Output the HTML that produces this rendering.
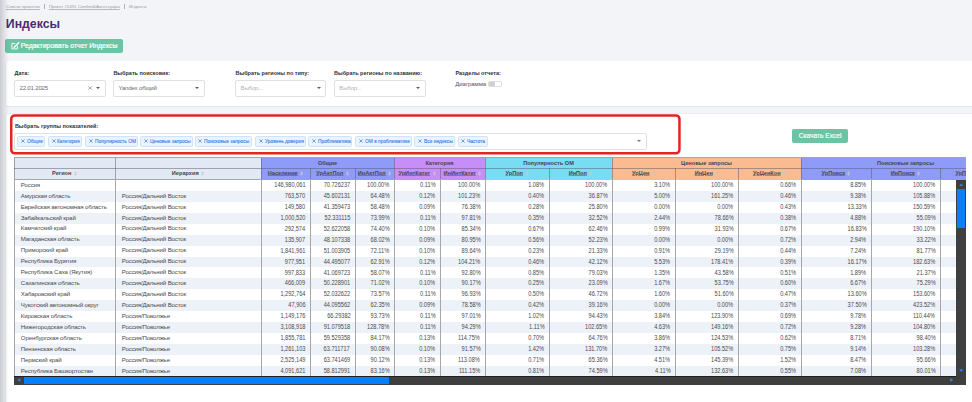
<!DOCTYPE html>
<html><head><meta charset="utf-8"><style>
*{box-sizing:border-box;margin:0;padding:0}
html,body{width:972px;height:402px;overflow:hidden}
body{position:relative;background:#f3f4f8;font-family:"Liberation Sans",sans-serif;color:#333}
.a{position:absolute}
.nw{white-space:nowrap}
.lbl{position:absolute;font-weight:700;font-size:5.5px;color:#2f2f3a;white-space:nowrap;line-height:6px}
.inp{position:absolute;background:#fff;border:1px solid #dfe0e4;border-radius:2px}
.inp .t{position:absolute;left:5px;top:-0.8px;bottom:0;display:flex;align-items:center;font-size:6.05px;letter-spacing:-0.18px;color:#6a6a70;white-space:nowrap}
.caret{position:absolute;width:0;height:0;border-left:2.2px solid transparent;border-right:2.2px solid transparent;border-top:2.4px solid #5a5a5a}
.tag{position:absolute;top:136.3px;height:10.5px;background:#ebf4fe;border:1px solid #cfe2f9;border-radius:1.5px;color:#3582e2;white-space:nowrap;line-height:1;-webkit-text-stroke:0.12px #3582e2}
.tag svg{position:absolute;left:2.9px;top:2px}
.tag span{position:absolute;left:8.6px;top:2.1px;font-size:5.3px;line-height:5.3px;transform:scaleX(.915);transform-origin:0 50%}
.cell{position:absolute;overflow:hidden;white-space:nowrap;display:flex;align-items:center}
.hd{justify-content:center;font-weight:700;font-size:5.6px;color:#45454f}
.hd>u,.hd>b{position:relative;top:-0.8px}
.hd u{text-decoration:underline;text-decoration-color:rgba(60,60,80,.42);text-underline-offset:0.2px}
.srt{margin-left:2.5px;flex:none;position:relative;top:-0.6px}
.bd{font-size:6.1px;letter-spacing:-0.13px;color:#4a4a4e}
.bd span{position:relative;top:-1.2px}
.num{justify-content:flex-end;padding-right:4.8px;font-size:6.4px;letter-spacing:0}
.num span{display:inline-block;transform:scaleX(.88);transform-origin:100% 50%;top:-0.9px}
.txt{padding-left:6.8px}
</style></head><body>

<div class="a nw" style="left:6px;top:4.1px;font-size:4.35px;line-height:6px;color:#9a9aa4"><span style="text-decoration:underline;text-decoration-color:#b8b8c0">Список проектов</span><span style="display:inline-block;width:1px;height:5px;background:#b0b0b8;margin:0 4px 0 4px;vertical-align:-1px"></span><span style="text-decoration:underline;text-decoration-color:#b8b8c0">Проект #1491 Comfort&amp;Аксессуары</span><span style="display:inline-block;width:1px;height:5px;background:#b0b0b8;margin:0 4px 0 4px;vertical-align:-1px"></span><span>Индексы</span></div>
<div class="a nw" style="left:5.8px;top:16px;font-size:12.3px;line-height:16px;font-weight:700;color:#4a2c70">Индексы</div>
<div class="a" style="left:5px;top:39px;width:118px;height:14px;background:#6cc4a4;border-radius:2px"></div>
<svg class="a" style="left:11px;top:42px" width="9" height="8" viewBox="0 0 9 8"><path d="M4.2 1.4H0.9V6.9H6.4V3.9" fill="none" stroke="#fff" stroke-width="0.95"/><path d="M3.2 5.2L7.7 0.7" stroke="#fff" stroke-width="1.5" stroke-linecap="round"/></svg>
<div class="a nw" style="left:20.7px;top:39px;height:14px;line-height:14px;font-size:6.9px;color:#fff;-webkit-text-stroke:0.2px #fff">Редактировать отчет Индексы</div>
<div class="a" style="left:5px;top:60.7px;width:967px;height:46.2px;background:#fff;border-bottom:1px solid #e4e5ea;border-left:0.6px solid #ececf0;border-radius:3px 0 0 3px"></div>
<div class="lbl" style="left:14.5px;top:69.6px">Дата:</div>
<div class="inp" style="left:14.2px;top:80px;width:91.5px;height:17px"><div class="t" style="left:4.3px">22.01.2025</div><svg class="a" style="left:72.4px;top:5px" width="4.2" height="4" viewBox="0 0 4.2 4"><path d="M0.3 0.2L3.9 3.8M3.9 0.2L0.3 3.8" stroke="#8a8a8a" stroke-width="0.75"/></svg><div class="caret" style="left:80.7px;top:5.8px"></div></div>
<div class="lbl" style="left:113.4px;top:69.6px">Выбрать поисковик:</div>
<div class="inp" style="left:113.2px;top:80px;width:91.4px;height:17px"><div class="t" style="left:4.3px">Yandex общий</div><div class="caret" style="left:80.9px;top:5.9px"></div></div>
<div class="lbl" style="left:235.5px;top:69.6px">Выбрать регионы по типу:</div>
<div class="inp" style="left:235.3px;top:80px;width:91.2px;height:17px"><div class="t" style="left:4.3px;color:#b4b4b8">Выбор...</div><div class="caret" style="left:80.9px;top:5.9px"></div></div>
<div class="lbl" style="left:334px;top:69.6px">Выбрать регионы по названию:</div>
<div class="inp" style="left:334px;top:80px;width:91.6px;height:17px"><div class="t" style="left:4.3px;color:#b4b4b8">Выбор...</div><div class="caret" style="left:81.3px;top:5.9px"></div></div>
<div class="lbl" style="left:455.4px;top:69.6px">Разделы отчета:</div>
<div class="a nw" style="left:455.3px;top:80.6px;font-size:6px;letter-spacing:-0.05px;line-height:6px;color:#555">Диаграмма</div>
<div class="a" style="left:488.3px;top:81.2px;width:13.4px;height:5.4px;border:0.8px solid #dedee2;border-radius:1.2px;background:#fff"><div class="a" style="left:0;top:0;width:6px;height:3.8px;border-radius:0.6px;background:#d0d0d4"></div></div>
<div class="a" style="left:5px;top:112.8px;width:967px;height:290px;background:#fff;border-left:0.6px solid #ececf0;border-top:0.6px solid #ececf0;border-radius:3px 0 0 0"></div>
<svg class="a" style="left:10px;top:114px" width="671" height="41" viewBox="0 0 671 41"><rect x="1.25" y="1.45" width="668.2" height="37.9" rx="3.6" fill="none" stroke="#e0271f" stroke-width="2.5"/></svg>
<div class="lbl" style="left:14.9px;top:122.7px">Выбрать группы показателей:</div>
<div class="inp" style="left:14px;top:133px;width:632.6px;height:16.6px"><div class="caret" style="left:621.8px;top:6.3px;border-top-color:#777"></div></div>
<div class="tag" style="left:17.2px;width:27.6px"><svg width="4" height="4" viewBox="0 0 4 4"><path d="M0.4 0.4L3.6 3.6M3.6 0.4L0.4 3.6" stroke="#3f87dc" stroke-width="0.75"/></svg><span>Общие</span></div>
<div class="tag" style="left:47.8px;width:34.6px"><svg width="4" height="4" viewBox="0 0 4 4"><path d="M0.4 0.4L3.6 3.6M3.6 0.4L0.4 3.6" stroke="#3f87dc" stroke-width="0.75"/></svg><span>Категория</span></div>
<div class="tag" style="left:85.1px;width:52.9px"><svg width="4" height="4" viewBox="0 0 4 4"><path d="M0.4 0.4L3.6 3.6M3.6 0.4L0.4 3.6" stroke="#3f87dc" stroke-width="0.75"/></svg><span>Популярность ОМ</span></div>
<div class="tag" style="left:140px;width:52.5px"><svg width="4" height="4" viewBox="0 0 4 4"><path d="M0.4 0.4L3.6 3.6M3.6 0.4L0.4 3.6" stroke="#3f87dc" stroke-width="0.75"/></svg><span>Ценовые запросы</span></div>
<div class="tag" style="left:194.6px;width:57.4px"><svg width="4" height="4" viewBox="0 0 4 4"><path d="M0.4 0.4L3.6 3.6M3.6 0.4L0.4 3.6" stroke="#3f87dc" stroke-width="0.75"/></svg><span>Поисковые запросы</span></div>
<div class="tag" style="left:255.1px;width:50.5px"><svg width="4" height="4" viewBox="0 0 4 4"><path d="M0.4 0.4L3.6 3.6M3.6 0.4L0.4 3.6" stroke="#3f87dc" stroke-width="0.75"/></svg><span>Уровень доверия</span></div>
<div class="tag" style="left:308px;width:44.3px"><svg width="4" height="4" viewBox="0 0 4 4"><path d="M0.4 0.4L3.6 3.6M3.6 0.4L0.4 3.6" stroke="#3f87dc" stroke-width="0.75"/></svg><span>Проблематика</span></div>
<div class="tag" style="left:355.3px;width:56.7px"><svg width="4" height="4" viewBox="0 0 4 4"><path d="M0.4 0.4L3.6 3.6M3.6 0.4L0.4 3.6" stroke="#3f87dc" stroke-width="0.75"/></svg><span>ОМ в проблематике</span></div>
<div class="tag" style="left:414.4px;width:40.3px"><svg width="4" height="4" viewBox="0 0 4 4"><path d="M0.4 0.4L3.6 3.6M3.6 0.4L0.4 3.6" stroke="#3f87dc" stroke-width="0.75"/></svg><span>Все индексы</span></div>
<div class="tag" style="left:457.6px;width:30.3px"><svg width="4" height="4" viewBox="0 0 4 4"><path d="M0.4 0.4L3.6 3.6M3.6 0.4L0.4 3.6" stroke="#3f87dc" stroke-width="0.75"/></svg><span>Частота</span></div>
<div class="a nw" style="left:792.1px;top:129.1px;width:56px;height:14.2px;background:#6cc4a4;border-radius:2px;color:#fff;font-size:6.6px;display:flex;align-items:center;justify-content:center"><span style="position:relative;top:-0.6px;-webkit-text-stroke:0.15px #fff">Скачать Excel</span></div>
<div class="a" style="left:14px;top:157px;width:952.0px;height:228.0px;overflow:hidden;background:#fff">
<div class="cell hd" style="left:0.0px;top:1px;width:101.0px;height:11.0px;background:#e2e8f4"><b></b></div>
<div class="cell hd" style="left:101.0px;top:1px;width:146.0px;height:11.0px;background:#e2e8f4"><b></b></div>
<div class="cell hd" style="left:247.0px;top:1px;width:133.0px;height:11.0px;background:#8f9bf8"><b>Общие</b></div>
<div class="cell hd" style="left:380.0px;top:1px;width:91.0px;height:11.0px;background:#c78ef8"><b>Категория</b></div>
<div class="cell hd" style="left:471.0px;top:1px;width:127.0px;height:11.0px;background:#78dcf2"><b>Популярность ОМ</b></div>
<div class="cell hd" style="left:598.0px;top:1px;width:189.0px;height:11.0px;background:#f9bb8f"><b>Ценовые запросы</b></div>
<div class="cell hd" style="left:787.0px;top:1px;width:209.0px;height:11.0px;background:#8f9bf8"><b>Поисковые запросы</b></div>
<div class="cell hd" style="left:0.0px;top:12.0px;width:101.0px;height:10.0px;background:#e2e8f4"><u style="text-decoration:none">Регион</u><svg class="srt" width="3" height="5" viewBox="0 0 3 5"><path d="M1.5 0.2L2.9 2.2H0.1z M1.5 4.8L2.9 2.8H0.1z" fill="#c9c9c2"/></svg></div>
<div class="cell hd" style="left:101.0px;top:12.0px;width:146.0px;height:10.0px;background:#e2e8f4"><u style="text-decoration:none">Иерархия</u><svg class="srt" width="3" height="5" viewBox="0 0 3 5"><path d="M1.5 0.2L2.9 2.2H0.1z M1.5 4.8L2.9 2.8H0.1z" fill="#c9c9c2"/></svg></div>
<div class="cell hd" style="left:247.0px;top:12.0px;width:49.0px;height:10.0px;background:#8f9bf8"><u>Население</u><svg class="srt" width="3" height="5" viewBox="0 0 3 5"><path d="M1.5 0.2L2.9 2.2H0.1z M1.5 4.8L2.9 2.8H0.1z" fill="#c9c9c2"/></svg></div>
<div class="cell hd" style="left:296.0px;top:12.0px;width:45.0px;height:10.0px;background:#8f9bf8"><u>УрАктПол</u><svg class="srt" width="3" height="5" viewBox="0 0 3 5"><path d="M1.5 0.2L2.9 2.2H0.1z M1.5 4.8L2.9 2.8H0.1z" fill="#c9c9c2"/></svg></div>
<div class="cell hd" style="left:341.0px;top:12.0px;width:39.0px;height:10.0px;background:#8f9bf8"><u>ИнАктПол</u><svg class="srt" width="3" height="5" viewBox="0 0 3 5"><path d="M1.5 0.2L2.9 2.2H0.1z M1.5 4.8L2.9 2.8H0.1z" fill="#c9c9c2"/></svg></div>
<div class="cell hd" style="left:380.0px;top:12.0px;width:46.0px;height:10.0px;background:#c78ef8"><u>УрИнтКатег</u><svg class="srt" width="3" height="5" viewBox="0 0 3 5"><path d="M1.5 0.2L2.9 2.2H0.1z M1.5 4.8L2.9 2.8H0.1z" fill="#c9c9c2"/></svg></div>
<div class="cell hd" style="left:426.0px;top:12.0px;width:45.0px;height:10.0px;background:#c78ef8"><u>ИнИнтКатег</u><svg class="srt" width="3" height="5" viewBox="0 0 3 5"><path d="M1.5 0.2L2.9 2.2H0.1z M1.5 4.8L2.9 2.8H0.1z" fill="#c9c9c2"/></svg></div>
<div class="cell hd" style="left:471.0px;top:12.0px;width:64.0px;height:10.0px;background:#78dcf2"><u>УрПоп</u><svg class="srt" width="3" height="5" viewBox="0 0 3 5"><path d="M1.5 0.2L2.9 2.2H0.1z M1.5 4.8L2.9 2.8H0.1z" fill="#c9c9c2"/></svg></div>
<div class="cell hd" style="left:535.0px;top:12.0px;width:63.0px;height:10.0px;background:#78dcf2"><u>ИнПоп</u><svg class="srt" width="3" height="5" viewBox="0 0 3 5"><path d="M1.5 0.2L2.9 2.2H0.1z M1.5 4.8L2.9 2.8H0.1z" fill="#c9c9c2"/></svg></div>
<div class="cell hd" style="left:598.0px;top:12.0px;width:63.0px;height:10.0px;background:#f9bb8f"><u>УрЦен</u><svg class="srt" width="3" height="5" viewBox="0 0 3 5"><path d="M1.5 0.2L2.9 2.2H0.1z M1.5 4.8L2.9 2.8H0.1z" fill="#c9c9c2"/></svg></div>
<div class="cell hd" style="left:661.0px;top:12.0px;width:63.0px;height:10.0px;background:#f9bb8f"><u>ИнЦен</u><svg class="srt" width="3" height="5" viewBox="0 0 3 5"><path d="M1.5 0.2L2.9 2.2H0.1z M1.5 4.8L2.9 2.8H0.1z" fill="#c9c9c2"/></svg></div>
<div class="cell hd" style="left:724.0px;top:12.0px;width:63.0px;height:10.0px;background:#f9bb8f"><u>УрЦенКон</u><svg class="srt" width="3" height="5" viewBox="0 0 3 5"><path d="M1.5 0.2L2.9 2.2H0.1z M1.5 4.8L2.9 2.8H0.1z" fill="#c9c9c2"/></svg></div>
<div class="cell hd" style="left:787.0px;top:12.0px;width:70.0px;height:10.0px;background:#8f9bf8"><u>УрПоиск</u><svg class="srt" width="3" height="5" viewBox="0 0 3 5"><path d="M1.5 0.2L2.9 2.2H0.1z M1.5 4.8L2.9 2.8H0.1z" fill="#c9c9c2"/></svg></div>
<div class="cell hd" style="left:857.0px;top:12.0px;width:69.0px;height:10.0px;background:#8f9bf8"><u>ИнПоиск</u><svg class="srt" width="3" height="5" viewBox="0 0 3 5"><path d="M1.5 0.2L2.9 2.2H0.1z M1.5 4.8L2.9 2.8H0.1z" fill="#c9c9c2"/></svg></div>
<div class="cell hd" style="left:926.0px;top:12.0px;width:70.0px;height:10.0px;background:#8f9bf8"><u>УрПоискКон</u><svg class="srt" width="3" height="5" viewBox="0 0 3 5"><path d="M1.5 0.2L2.9 2.2H0.1z M1.5 4.8L2.9 2.8H0.1z" fill="#c9c9c2"/></svg></div>
<div class="a" style="left:0;top:23.00px;width:942.0px;height:10.93px;background:#fff"></div>
<div class="cell bd txt" style="left:0.0px;top:23.00px;width:101.0px;height:10.93px"><span>Россия</span></div>
<div class="cell bd txt" style="left:101.0px;top:23.00px;width:146.0px;height:10.93px"><span></span></div>
<div class="cell bd num" style="left:247.0px;top:23.00px;width:49.0px;height:10.93px"><span>146,980,061</span></div>
<div class="cell bd num" style="left:296.0px;top:23.00px;width:45.0px;height:10.93px"><span>70.726237</span></div>
<div class="cell bd num" style="left:341.0px;top:23.00px;width:39.0px;height:10.93px"><span>100.00%</span></div>
<div class="cell bd num" style="left:380.0px;top:23.00px;width:46.0px;height:10.93px"><span>0.11%</span></div>
<div class="cell bd num" style="left:426.0px;top:23.00px;width:45.0px;height:10.93px"><span>100.00%</span></div>
<div class="cell bd num" style="left:471.0px;top:23.00px;width:64.0px;height:10.93px"><span>1.08%</span></div>
<div class="cell bd num" style="left:535.0px;top:23.00px;width:63.0px;height:10.93px"><span>100.00%</span></div>
<div class="cell bd num" style="left:598.0px;top:23.00px;width:63.0px;height:10.93px"><span>3.10%</span></div>
<div class="cell bd num" style="left:661.0px;top:23.00px;width:63.0px;height:10.93px"><span>100.00%</span></div>
<div class="cell bd num" style="left:724.0px;top:23.00px;width:63.0px;height:10.93px"><span>0.66%</span></div>
<div class="cell bd num" style="left:787.0px;top:23.00px;width:70.0px;height:10.93px"><span>8.85%</span></div>
<div class="cell bd num" style="left:857.0px;top:23.00px;width:69.0px;height:10.93px"><span>100.00%</span></div>
<div class="a" style="left:0;top:33.93px;width:942.0px;height:10.93px;background:#edf1f8"></div>
<div class="cell bd txt" style="left:0.0px;top:33.93px;width:101.0px;height:10.93px"><span>Амурская область</span></div>
<div class="cell bd txt" style="left:101.0px;top:33.93px;width:146.0px;height:10.93px"><span>Россия/Дальний Восток</span></div>
<div class="cell bd num" style="left:247.0px;top:33.93px;width:49.0px;height:10.93px"><span>763,570</span></div>
<div class="cell bd num" style="left:296.0px;top:33.93px;width:45.0px;height:10.93px"><span>45.602131</span></div>
<div class="cell bd num" style="left:341.0px;top:33.93px;width:39.0px;height:10.93px"><span>64.48%</span></div>
<div class="cell bd num" style="left:380.0px;top:33.93px;width:46.0px;height:10.93px"><span>0.12%</span></div>
<div class="cell bd num" style="left:426.0px;top:33.93px;width:45.0px;height:10.93px"><span>101.23%</span></div>
<div class="cell bd num" style="left:471.0px;top:33.93px;width:64.0px;height:10.93px"><span>0.40%</span></div>
<div class="cell bd num" style="left:535.0px;top:33.93px;width:63.0px;height:10.93px"><span>36.87%</span></div>
<div class="cell bd num" style="left:598.0px;top:33.93px;width:63.0px;height:10.93px"><span>5.00%</span></div>
<div class="cell bd num" style="left:661.0px;top:33.93px;width:63.0px;height:10.93px"><span>161.25%</span></div>
<div class="cell bd num" style="left:724.0px;top:33.93px;width:63.0px;height:10.93px"><span>0.46%</span></div>
<div class="cell bd num" style="left:787.0px;top:33.93px;width:70.0px;height:10.93px"><span>9.38%</span></div>
<div class="cell bd num" style="left:857.0px;top:33.93px;width:69.0px;height:10.93px"><span>105.88%</span></div>
<div class="a" style="left:0;top:44.86px;width:942.0px;height:10.93px;background:#fff"></div>
<div class="cell bd txt" style="left:0.0px;top:44.86px;width:101.0px;height:10.93px"><span>Еврейская автономная область</span></div>
<div class="cell bd txt" style="left:101.0px;top:44.86px;width:146.0px;height:10.93px"><span>Россия/Дальний Восток</span></div>
<div class="cell bd num" style="left:247.0px;top:44.86px;width:49.0px;height:10.93px"><span>149,580</span></div>
<div class="cell bd num" style="left:296.0px;top:44.86px;width:45.0px;height:10.93px"><span>41.359473</span></div>
<div class="cell bd num" style="left:341.0px;top:44.86px;width:39.0px;height:10.93px"><span>58.48%</span></div>
<div class="cell bd num" style="left:380.0px;top:44.86px;width:46.0px;height:10.93px"><span>0.09%</span></div>
<div class="cell bd num" style="left:426.0px;top:44.86px;width:45.0px;height:10.93px"><span>76.38%</span></div>
<div class="cell bd num" style="left:471.0px;top:44.86px;width:64.0px;height:10.93px"><span>0.28%</span></div>
<div class="cell bd num" style="left:535.0px;top:44.86px;width:63.0px;height:10.93px"><span>25.80%</span></div>
<div class="cell bd num" style="left:598.0px;top:44.86px;width:63.0px;height:10.93px"><span>0.00%</span></div>
<div class="cell bd num" style="left:661.0px;top:44.86px;width:63.0px;height:10.93px"><span>0.00%</span></div>
<div class="cell bd num" style="left:724.0px;top:44.86px;width:63.0px;height:10.93px"><span>0.43%</span></div>
<div class="cell bd num" style="left:787.0px;top:44.86px;width:70.0px;height:10.93px"><span>13.33%</span></div>
<div class="cell bd num" style="left:857.0px;top:44.86px;width:69.0px;height:10.93px"><span>150.59%</span></div>
<div class="a" style="left:0;top:55.79px;width:942.0px;height:10.93px;background:#edf1f8"></div>
<div class="cell bd txt" style="left:0.0px;top:55.79px;width:101.0px;height:10.93px"><span>Забайкальский край</span></div>
<div class="cell bd txt" style="left:101.0px;top:55.79px;width:146.0px;height:10.93px"><span>Россия/Дальний Восток</span></div>
<div class="cell bd num" style="left:247.0px;top:55.79px;width:49.0px;height:10.93px"><span>1,000,520</span></div>
<div class="cell bd num" style="left:296.0px;top:55.79px;width:45.0px;height:10.93px"><span>52.331115</span></div>
<div class="cell bd num" style="left:341.0px;top:55.79px;width:39.0px;height:10.93px"><span>73.99%</span></div>
<div class="cell bd num" style="left:380.0px;top:55.79px;width:46.0px;height:10.93px"><span>0.11%</span></div>
<div class="cell bd num" style="left:426.0px;top:55.79px;width:45.0px;height:10.93px"><span>97.81%</span></div>
<div class="cell bd num" style="left:471.0px;top:55.79px;width:64.0px;height:10.93px"><span>0.35%</span></div>
<div class="cell bd num" style="left:535.0px;top:55.79px;width:63.0px;height:10.93px"><span>32.52%</span></div>
<div class="cell bd num" style="left:598.0px;top:55.79px;width:63.0px;height:10.93px"><span>2.44%</span></div>
<div class="cell bd num" style="left:661.0px;top:55.79px;width:63.0px;height:10.93px"><span>78.66%</span></div>
<div class="cell bd num" style="left:724.0px;top:55.79px;width:63.0px;height:10.93px"><span>0.38%</span></div>
<div class="cell bd num" style="left:787.0px;top:55.79px;width:70.0px;height:10.93px"><span>4.88%</span></div>
<div class="cell bd num" style="left:857.0px;top:55.79px;width:69.0px;height:10.93px"><span>55.09%</span></div>
<div class="a" style="left:0;top:66.72px;width:942.0px;height:10.93px;background:#fff"></div>
<div class="cell bd txt" style="left:0.0px;top:66.72px;width:101.0px;height:10.93px"><span>Камчатский край</span></div>
<div class="cell bd txt" style="left:101.0px;top:66.72px;width:146.0px;height:10.93px"><span>Россия/Дальний Восток</span></div>
<div class="cell bd num" style="left:247.0px;top:66.72px;width:49.0px;height:10.93px"><span>292,574</span></div>
<div class="cell bd num" style="left:296.0px;top:66.72px;width:45.0px;height:10.93px"><span>52.622058</span></div>
<div class="cell bd num" style="left:341.0px;top:66.72px;width:39.0px;height:10.93px"><span>74.40%</span></div>
<div class="cell bd num" style="left:380.0px;top:66.72px;width:46.0px;height:10.93px"><span>0.10%</span></div>
<div class="cell bd num" style="left:426.0px;top:66.72px;width:45.0px;height:10.93px"><span>85.34%</span></div>
<div class="cell bd num" style="left:471.0px;top:66.72px;width:64.0px;height:10.93px"><span>0.67%</span></div>
<div class="cell bd num" style="left:535.0px;top:66.72px;width:63.0px;height:10.93px"><span>62.46%</span></div>
<div class="cell bd num" style="left:598.0px;top:66.72px;width:63.0px;height:10.93px"><span>0.99%</span></div>
<div class="cell bd num" style="left:661.0px;top:66.72px;width:63.0px;height:10.93px"><span>31.93%</span></div>
<div class="cell bd num" style="left:724.0px;top:66.72px;width:63.0px;height:10.93px"><span>0.67%</span></div>
<div class="cell bd num" style="left:787.0px;top:66.72px;width:70.0px;height:10.93px"><span>16.83%</span></div>
<div class="cell bd num" style="left:857.0px;top:66.72px;width:69.0px;height:10.93px"><span>190.10%</span></div>
<div class="a" style="left:0;top:77.65px;width:942.0px;height:10.93px;background:#edf1f8"></div>
<div class="cell bd txt" style="left:0.0px;top:77.65px;width:101.0px;height:10.93px"><span>Магаданская область</span></div>
<div class="cell bd txt" style="left:101.0px;top:77.65px;width:146.0px;height:10.93px"><span>Россия/Дальний Восток</span></div>
<div class="cell bd num" style="left:247.0px;top:77.65px;width:49.0px;height:10.93px"><span>135,907</span></div>
<div class="cell bd num" style="left:296.0px;top:77.65px;width:45.0px;height:10.93px"><span>48.107338</span></div>
<div class="cell bd num" style="left:341.0px;top:77.65px;width:39.0px;height:10.93px"><span>68.02%</span></div>
<div class="cell bd num" style="left:380.0px;top:77.65px;width:46.0px;height:10.93px"><span>0.09%</span></div>
<div class="cell bd num" style="left:426.0px;top:77.65px;width:45.0px;height:10.93px"><span>80.95%</span></div>
<div class="cell bd num" style="left:471.0px;top:77.65px;width:64.0px;height:10.93px"><span>0.56%</span></div>
<div class="cell bd num" style="left:535.0px;top:77.65px;width:63.0px;height:10.93px"><span>52.23%</span></div>
<div class="cell bd num" style="left:598.0px;top:77.65px;width:63.0px;height:10.93px"><span>0.00%</span></div>
<div class="cell bd num" style="left:661.0px;top:77.65px;width:63.0px;height:10.93px"><span>0.00%</span></div>
<div class="cell bd num" style="left:724.0px;top:77.65px;width:63.0px;height:10.93px"><span>0.72%</span></div>
<div class="cell bd num" style="left:787.0px;top:77.65px;width:70.0px;height:10.93px"><span>2.94%</span></div>
<div class="cell bd num" style="left:857.0px;top:77.65px;width:69.0px;height:10.93px"><span>33.22%</span></div>
<div class="a" style="left:0;top:88.58px;width:942.0px;height:10.93px;background:#fff"></div>
<div class="cell bd txt" style="left:0.0px;top:88.58px;width:101.0px;height:10.93px"><span>Приморский край</span></div>
<div class="cell bd txt" style="left:101.0px;top:88.58px;width:146.0px;height:10.93px"><span>Россия/Дальний Восток</span></div>
<div class="cell bd num" style="left:247.0px;top:88.58px;width:49.0px;height:10.93px"><span>1,841,961</span></div>
<div class="cell bd num" style="left:296.0px;top:88.58px;width:45.0px;height:10.93px"><span>51.003905</span></div>
<div class="cell bd num" style="left:341.0px;top:88.58px;width:39.0px;height:10.93px"><span>72.11%</span></div>
<div class="cell bd num" style="left:380.0px;top:88.58px;width:46.0px;height:10.93px"><span>0.10%</span></div>
<div class="cell bd num" style="left:426.0px;top:88.58px;width:45.0px;height:10.93px"><span>89.64%</span></div>
<div class="cell bd num" style="left:471.0px;top:88.58px;width:64.0px;height:10.93px"><span>0.23%</span></div>
<div class="cell bd num" style="left:535.0px;top:88.58px;width:63.0px;height:10.93px"><span>21.33%</span></div>
<div class="cell bd num" style="left:598.0px;top:88.58px;width:63.0px;height:10.93px"><span>0.91%</span></div>
<div class="cell bd num" style="left:661.0px;top:88.58px;width:63.0px;height:10.93px"><span>29.19%</span></div>
<div class="cell bd num" style="left:724.0px;top:88.58px;width:63.0px;height:10.93px"><span>0.44%</span></div>
<div class="cell bd num" style="left:787.0px;top:88.58px;width:70.0px;height:10.93px"><span>7.24%</span></div>
<div class="cell bd num" style="left:857.0px;top:88.58px;width:69.0px;height:10.93px"><span>81.77%</span></div>
<div class="a" style="left:0;top:99.51px;width:942.0px;height:10.93px;background:#edf1f8"></div>
<div class="cell bd txt" style="left:0.0px;top:99.51px;width:101.0px;height:10.93px"><span>Республика Бурятия</span></div>
<div class="cell bd txt" style="left:101.0px;top:99.51px;width:146.0px;height:10.93px"><span>Россия/Дальний Восток</span></div>
<div class="cell bd num" style="left:247.0px;top:99.51px;width:49.0px;height:10.93px"><span>977,951</span></div>
<div class="cell bd num" style="left:296.0px;top:99.51px;width:45.0px;height:10.93px"><span>44.495077</span></div>
<div class="cell bd num" style="left:341.0px;top:99.51px;width:39.0px;height:10.93px"><span>62.91%</span></div>
<div class="cell bd num" style="left:380.0px;top:99.51px;width:46.0px;height:10.93px"><span>0.12%</span></div>
<div class="cell bd num" style="left:426.0px;top:99.51px;width:45.0px;height:10.93px"><span>104.21%</span></div>
<div class="cell bd num" style="left:471.0px;top:99.51px;width:64.0px;height:10.93px"><span>0.46%</span></div>
<div class="cell bd num" style="left:535.0px;top:99.51px;width:63.0px;height:10.93px"><span>42.12%</span></div>
<div class="cell bd num" style="left:598.0px;top:99.51px;width:63.0px;height:10.93px"><span>5.53%</span></div>
<div class="cell bd num" style="left:661.0px;top:99.51px;width:63.0px;height:10.93px"><span>178.41%</span></div>
<div class="cell bd num" style="left:724.0px;top:99.51px;width:63.0px;height:10.93px"><span>0.39%</span></div>
<div class="cell bd num" style="left:787.0px;top:99.51px;width:70.0px;height:10.93px"><span>16.17%</span></div>
<div class="cell bd num" style="left:857.0px;top:99.51px;width:69.0px;height:10.93px"><span>182.63%</span></div>
<div class="a" style="left:0;top:110.44px;width:942.0px;height:10.93px;background:#fff"></div>
<div class="cell bd txt" style="left:0.0px;top:110.44px;width:101.0px;height:10.93px"><span>Республика Саха (Якутия)</span></div>
<div class="cell bd txt" style="left:101.0px;top:110.44px;width:146.0px;height:10.93px"><span>Россия/Дальний Восток</span></div>
<div class="cell bd num" style="left:247.0px;top:110.44px;width:49.0px;height:10.93px"><span>997,833</span></div>
<div class="cell bd num" style="left:296.0px;top:110.44px;width:45.0px;height:10.93px"><span>41.069723</span></div>
<div class="cell bd num" style="left:341.0px;top:110.44px;width:39.0px;height:10.93px"><span>58.07%</span></div>
<div class="cell bd num" style="left:380.0px;top:110.44px;width:46.0px;height:10.93px"><span>0.11%</span></div>
<div class="cell bd num" style="left:426.0px;top:110.44px;width:45.0px;height:10.93px"><span>92.80%</span></div>
<div class="cell bd num" style="left:471.0px;top:110.44px;width:64.0px;height:10.93px"><span>0.85%</span></div>
<div class="cell bd num" style="left:535.0px;top:110.44px;width:63.0px;height:10.93px"><span>79.03%</span></div>
<div class="cell bd num" style="left:598.0px;top:110.44px;width:63.0px;height:10.93px"><span>1.35%</span></div>
<div class="cell bd num" style="left:661.0px;top:110.44px;width:63.0px;height:10.93px"><span>43.58%</span></div>
<div class="cell bd num" style="left:724.0px;top:110.44px;width:63.0px;height:10.93px"><span>0.51%</span></div>
<div class="cell bd num" style="left:787.0px;top:110.44px;width:70.0px;height:10.93px"><span>1.89%</span></div>
<div class="cell bd num" style="left:857.0px;top:110.44px;width:69.0px;height:10.93px"><span>21.37%</span></div>
<div class="a" style="left:0;top:121.37px;width:942.0px;height:10.93px;background:#edf1f8"></div>
<div class="cell bd txt" style="left:0.0px;top:121.37px;width:101.0px;height:10.93px"><span>Сахалинская область</span></div>
<div class="cell bd txt" style="left:101.0px;top:121.37px;width:146.0px;height:10.93px"><span>Россия/Дальний Восток</span></div>
<div class="cell bd num" style="left:247.0px;top:121.37px;width:49.0px;height:10.93px"><span>466,009</span></div>
<div class="cell bd num" style="left:296.0px;top:121.37px;width:45.0px;height:10.93px"><span>50.228901</span></div>
<div class="cell bd num" style="left:341.0px;top:121.37px;width:39.0px;height:10.93px"><span>71.02%</span></div>
<div class="cell bd num" style="left:380.0px;top:121.37px;width:46.0px;height:10.93px"><span>0.10%</span></div>
<div class="cell bd num" style="left:426.0px;top:121.37px;width:45.0px;height:10.93px"><span>90.17%</span></div>
<div class="cell bd num" style="left:471.0px;top:121.37px;width:64.0px;height:10.93px"><span>0.25%</span></div>
<div class="cell bd num" style="left:535.0px;top:121.37px;width:63.0px;height:10.93px"><span>23.09%</span></div>
<div class="cell bd num" style="left:598.0px;top:121.37px;width:63.0px;height:10.93px"><span>1.67%</span></div>
<div class="cell bd num" style="left:661.0px;top:121.37px;width:63.0px;height:10.93px"><span>53.75%</span></div>
<div class="cell bd num" style="left:724.0px;top:121.37px;width:63.0px;height:10.93px"><span>0.60%</span></div>
<div class="cell bd num" style="left:787.0px;top:121.37px;width:70.0px;height:10.93px"><span>6.67%</span></div>
<div class="cell bd num" style="left:857.0px;top:121.37px;width:69.0px;height:10.93px"><span>75.29%</span></div>
<div class="a" style="left:0;top:132.30px;width:942.0px;height:10.93px;background:#fff"></div>
<div class="cell bd txt" style="left:0.0px;top:132.30px;width:101.0px;height:10.93px"><span>Хабаровский край</span></div>
<div class="cell bd txt" style="left:101.0px;top:132.30px;width:146.0px;height:10.93px"><span>Россия/Дальний Восток</span></div>
<div class="cell bd num" style="left:247.0px;top:132.30px;width:49.0px;height:10.93px"><span>1,292,764</span></div>
<div class="cell bd num" style="left:296.0px;top:132.30px;width:45.0px;height:10.93px"><span>52.032622</span></div>
<div class="cell bd num" style="left:341.0px;top:132.30px;width:39.0px;height:10.93px"><span>73.57%</span></div>
<div class="cell bd num" style="left:380.0px;top:132.30px;width:46.0px;height:10.93px"><span>0.11%</span></div>
<div class="cell bd num" style="left:426.0px;top:132.30px;width:45.0px;height:10.93px"><span>96.93%</span></div>
<div class="cell bd num" style="left:471.0px;top:132.30px;width:64.0px;height:10.93px"><span>0.50%</span></div>
<div class="cell bd num" style="left:535.0px;top:132.30px;width:63.0px;height:10.93px"><span>46.72%</span></div>
<div class="cell bd num" style="left:598.0px;top:132.30px;width:63.0px;height:10.93px"><span>1.60%</span></div>
<div class="cell bd num" style="left:661.0px;top:132.30px;width:63.0px;height:10.93px"><span>51.60%</span></div>
<div class="cell bd num" style="left:724.0px;top:132.30px;width:63.0px;height:10.93px"><span>0.47%</span></div>
<div class="cell bd num" style="left:787.0px;top:132.30px;width:70.0px;height:10.93px"><span>13.60%</span></div>
<div class="cell bd num" style="left:857.0px;top:132.30px;width:69.0px;height:10.93px"><span>153.60%</span></div>
<div class="a" style="left:0;top:143.23px;width:942.0px;height:10.93px;background:#edf1f8"></div>
<div class="cell bd txt" style="left:0.0px;top:143.23px;width:101.0px;height:10.93px"><span>Чукотский автономный округ</span></div>
<div class="cell bd txt" style="left:101.0px;top:143.23px;width:146.0px;height:10.93px"><span>Россия/Дальний Восток</span></div>
<div class="cell bd num" style="left:247.0px;top:143.23px;width:49.0px;height:10.93px"><span>47,906</span></div>
<div class="cell bd num" style="left:296.0px;top:143.23px;width:45.0px;height:10.93px"><span>44.095562</span></div>
<div class="cell bd num" style="left:341.0px;top:143.23px;width:39.0px;height:10.93px"><span>62.35%</span></div>
<div class="cell bd num" style="left:380.0px;top:143.23px;width:46.0px;height:10.93px"><span>0.09%</span></div>
<div class="cell bd num" style="left:426.0px;top:143.23px;width:45.0px;height:10.93px"><span>78.58%</span></div>
<div class="cell bd num" style="left:471.0px;top:143.23px;width:64.0px;height:10.93px"><span>0.42%</span></div>
<div class="cell bd num" style="left:535.0px;top:143.23px;width:63.0px;height:10.93px"><span>39.16%</span></div>
<div class="cell bd num" style="left:598.0px;top:143.23px;width:63.0px;height:10.93px"><span>0.00%</span></div>
<div class="cell bd num" style="left:661.0px;top:143.23px;width:63.0px;height:10.93px"><span>0.00%</span></div>
<div class="cell bd num" style="left:724.0px;top:143.23px;width:63.0px;height:10.93px"><span>0.37%</span></div>
<div class="cell bd num" style="left:787.0px;top:143.23px;width:70.0px;height:10.93px"><span>37.50%</span></div>
<div class="cell bd num" style="left:857.0px;top:143.23px;width:69.0px;height:10.93px"><span>423.52%</span></div>
<div class="a" style="left:0;top:154.16px;width:942.0px;height:10.93px;background:#fff"></div>
<div class="cell bd txt" style="left:0.0px;top:154.16px;width:101.0px;height:10.93px"><span>Кировская область</span></div>
<div class="cell bd txt" style="left:101.0px;top:154.16px;width:146.0px;height:10.93px"><span>Россия/Поволжье</span></div>
<div class="cell bd num" style="left:247.0px;top:154.16px;width:49.0px;height:10.93px"><span>1,149,176</span></div>
<div class="cell bd num" style="left:296.0px;top:154.16px;width:45.0px;height:10.93px"><span>66.29382</span></div>
<div class="cell bd num" style="left:341.0px;top:154.16px;width:39.0px;height:10.93px"><span>93.73%</span></div>
<div class="cell bd num" style="left:380.0px;top:154.16px;width:46.0px;height:10.93px"><span>0.11%</span></div>
<div class="cell bd num" style="left:426.0px;top:154.16px;width:45.0px;height:10.93px"><span>97.01%</span></div>
<div class="cell bd num" style="left:471.0px;top:154.16px;width:64.0px;height:10.93px"><span>1.02%</span></div>
<div class="cell bd num" style="left:535.0px;top:154.16px;width:63.0px;height:10.93px"><span>94.43%</span></div>
<div class="cell bd num" style="left:598.0px;top:154.16px;width:63.0px;height:10.93px"><span>3.84%</span></div>
<div class="cell bd num" style="left:661.0px;top:154.16px;width:63.0px;height:10.93px"><span>123.90%</span></div>
<div class="cell bd num" style="left:724.0px;top:154.16px;width:63.0px;height:10.93px"><span>0.69%</span></div>
<div class="cell bd num" style="left:787.0px;top:154.16px;width:70.0px;height:10.93px"><span>9.78%</span></div>
<div class="cell bd num" style="left:857.0px;top:154.16px;width:69.0px;height:10.93px"><span>110.44%</span></div>
<div class="a" style="left:0;top:165.09px;width:942.0px;height:10.93px;background:#edf1f8"></div>
<div class="cell bd txt" style="left:0.0px;top:165.09px;width:101.0px;height:10.93px"><span>Нижегородская область</span></div>
<div class="cell bd txt" style="left:101.0px;top:165.09px;width:146.0px;height:10.93px"><span>Россия/Поволжье</span></div>
<div class="cell bd num" style="left:247.0px;top:165.09px;width:49.0px;height:10.93px"><span>3,108,918</span></div>
<div class="cell bd num" style="left:296.0px;top:165.09px;width:45.0px;height:10.93px"><span>91.079518</span></div>
<div class="cell bd num" style="left:341.0px;top:165.09px;width:39.0px;height:10.93px"><span>128.78%</span></div>
<div class="cell bd num" style="left:380.0px;top:165.09px;width:46.0px;height:10.93px"><span>0.11%</span></div>
<div class="cell bd num" style="left:426.0px;top:165.09px;width:45.0px;height:10.93px"><span>94.29%</span></div>
<div class="cell bd num" style="left:471.0px;top:165.09px;width:64.0px;height:10.93px"><span>1.11%</span></div>
<div class="cell bd num" style="left:535.0px;top:165.09px;width:63.0px;height:10.93px"><span>102.65%</span></div>
<div class="cell bd num" style="left:598.0px;top:165.09px;width:63.0px;height:10.93px"><span>4.63%</span></div>
<div class="cell bd num" style="left:661.0px;top:165.09px;width:63.0px;height:10.93px"><span>149.16%</span></div>
<div class="cell bd num" style="left:724.0px;top:165.09px;width:63.0px;height:10.93px"><span>0.72%</span></div>
<div class="cell bd num" style="left:787.0px;top:165.09px;width:70.0px;height:10.93px"><span>9.28%</span></div>
<div class="cell bd num" style="left:857.0px;top:165.09px;width:69.0px;height:10.93px"><span>104.80%</span></div>
<div class="a" style="left:0;top:176.02px;width:942.0px;height:10.93px;background:#fff"></div>
<div class="cell bd txt" style="left:0.0px;top:176.02px;width:101.0px;height:10.93px"><span>Оренбургская область</span></div>
<div class="cell bd txt" style="left:101.0px;top:176.02px;width:146.0px;height:10.93px"><span>Россия/Поволжье</span></div>
<div class="cell bd num" style="left:247.0px;top:176.02px;width:49.0px;height:10.93px"><span>1,855,781</span></div>
<div class="cell bd num" style="left:296.0px;top:176.02px;width:45.0px;height:10.93px"><span>59.529358</span></div>
<div class="cell bd num" style="left:341.0px;top:176.02px;width:39.0px;height:10.93px"><span>84.17%</span></div>
<div class="cell bd num" style="left:380.0px;top:176.02px;width:46.0px;height:10.93px"><span>0.13%</span></div>
<div class="cell bd num" style="left:426.0px;top:176.02px;width:45.0px;height:10.93px"><span>114.75%</span></div>
<div class="cell bd num" style="left:471.0px;top:176.02px;width:64.0px;height:10.93px"><span>0.70%</span></div>
<div class="cell bd num" style="left:535.0px;top:176.02px;width:63.0px;height:10.93px"><span>64.76%</span></div>
<div class="cell bd num" style="left:598.0px;top:176.02px;width:63.0px;height:10.93px"><span>3.86%</span></div>
<div class="cell bd num" style="left:661.0px;top:176.02px;width:63.0px;height:10.93px"><span>124.53%</span></div>
<div class="cell bd num" style="left:724.0px;top:176.02px;width:63.0px;height:10.93px"><span>0.62%</span></div>
<div class="cell bd num" style="left:787.0px;top:176.02px;width:70.0px;height:10.93px"><span>8.71%</span></div>
<div class="cell bd num" style="left:857.0px;top:176.02px;width:69.0px;height:10.93px"><span>98.40%</span></div>
<div class="a" style="left:0;top:186.95px;width:942.0px;height:10.93px;background:#edf1f8"></div>
<div class="cell bd txt" style="left:0.0px;top:186.95px;width:101.0px;height:10.93px"><span>Пензенская область</span></div>
<div class="cell bd txt" style="left:101.0px;top:186.95px;width:146.0px;height:10.93px"><span>Россия/Поволжье</span></div>
<div class="cell bd num" style="left:247.0px;top:186.95px;width:49.0px;height:10.93px"><span>1,261,103</span></div>
<div class="cell bd num" style="left:296.0px;top:186.95px;width:45.0px;height:10.93px"><span>63.711717</span></div>
<div class="cell bd num" style="left:341.0px;top:186.95px;width:39.0px;height:10.93px"><span>90.08%</span></div>
<div class="cell bd num" style="left:380.0px;top:186.95px;width:46.0px;height:10.93px"><span>0.10%</span></div>
<div class="cell bd num" style="left:426.0px;top:186.95px;width:45.0px;height:10.93px"><span>91.57%</span></div>
<div class="cell bd num" style="left:471.0px;top:186.95px;width:64.0px;height:10.93px"><span>1.42%</span></div>
<div class="cell bd num" style="left:535.0px;top:186.95px;width:63.0px;height:10.93px"><span>131.70%</span></div>
<div class="cell bd num" style="left:598.0px;top:186.95px;width:63.0px;height:10.93px"><span>3.27%</span></div>
<div class="cell bd num" style="left:661.0px;top:186.95px;width:63.0px;height:10.93px"><span>105.52%</span></div>
<div class="cell bd num" style="left:724.0px;top:186.95px;width:63.0px;height:10.93px"><span>0.75%</span></div>
<div class="cell bd num" style="left:787.0px;top:186.95px;width:70.0px;height:10.93px"><span>9.14%</span></div>
<div class="cell bd num" style="left:857.0px;top:186.95px;width:69.0px;height:10.93px"><span>103.28%</span></div>
<div class="a" style="left:0;top:197.88px;width:942.0px;height:10.93px;background:#fff"></div>
<div class="cell bd txt" style="left:0.0px;top:197.88px;width:101.0px;height:10.93px"><span>Пермский край</span></div>
<div class="cell bd txt" style="left:101.0px;top:197.88px;width:146.0px;height:10.93px"><span>Россия/Поволжье</span></div>
<div class="cell bd num" style="left:247.0px;top:197.88px;width:49.0px;height:10.93px"><span>2,525,149</span></div>
<div class="cell bd num" style="left:296.0px;top:197.88px;width:45.0px;height:10.93px"><span>63.741469</span></div>
<div class="cell bd num" style="left:341.0px;top:197.88px;width:39.0px;height:10.93px"><span>90.12%</span></div>
<div class="cell bd num" style="left:380.0px;top:197.88px;width:46.0px;height:10.93px"><span>0.13%</span></div>
<div class="cell bd num" style="left:426.0px;top:197.88px;width:45.0px;height:10.93px"><span>113.08%</span></div>
<div class="cell bd num" style="left:471.0px;top:197.88px;width:64.0px;height:10.93px"><span>0.71%</span></div>
<div class="cell bd num" style="left:535.0px;top:197.88px;width:63.0px;height:10.93px"><span>65.36%</span></div>
<div class="cell bd num" style="left:598.0px;top:197.88px;width:63.0px;height:10.93px"><span>4.51%</span></div>
<div class="cell bd num" style="left:661.0px;top:197.88px;width:63.0px;height:10.93px"><span>145.39%</span></div>
<div class="cell bd num" style="left:724.0px;top:197.88px;width:63.0px;height:10.93px"><span>1.52%</span></div>
<div class="cell bd num" style="left:787.0px;top:197.88px;width:70.0px;height:10.93px"><span>8.47%</span></div>
<div class="cell bd num" style="left:857.0px;top:197.88px;width:69.0px;height:10.93px"><span>95.66%</span></div>
<div class="a" style="left:0;top:208.81px;width:942.0px;height:10.93px;background:#edf1f8"></div>
<div class="cell bd txt" style="left:0.0px;top:208.81px;width:101.0px;height:10.93px"><span>Республика Башкортостан</span></div>
<div class="cell bd txt" style="left:101.0px;top:208.81px;width:146.0px;height:10.93px"><span>Россия/Поволжье</span></div>
<div class="cell bd num" style="left:247.0px;top:208.81px;width:49.0px;height:10.93px"><span>4,091,621</span></div>
<div class="cell bd num" style="left:296.0px;top:208.81px;width:45.0px;height:10.93px"><span>58.812991</span></div>
<div class="cell bd num" style="left:341.0px;top:208.81px;width:39.0px;height:10.93px"><span>83.16%</span></div>
<div class="cell bd num" style="left:380.0px;top:208.81px;width:46.0px;height:10.93px"><span>0.13%</span></div>
<div class="cell bd num" style="left:426.0px;top:208.81px;width:45.0px;height:10.93px"><span>111.15%</span></div>
<div class="cell bd num" style="left:471.0px;top:208.81px;width:64.0px;height:10.93px"><span>0.81%</span></div>
<div class="cell bd num" style="left:535.0px;top:208.81px;width:63.0px;height:10.93px"><span>74.59%</span></div>
<div class="cell bd num" style="left:598.0px;top:208.81px;width:63.0px;height:10.93px"><span>4.11%</span></div>
<div class="cell bd num" style="left:661.0px;top:208.81px;width:63.0px;height:10.93px"><span>132.63%</span></div>
<div class="cell bd num" style="left:724.0px;top:208.81px;width:63.0px;height:10.93px"><span>0.55%</span></div>
<div class="cell bd num" style="left:787.0px;top:208.81px;width:70.0px;height:10.93px"><span>7.08%</span></div>
<div class="cell bd num" style="left:857.0px;top:208.81px;width:69.0px;height:10.93px"><span>80.01%</span></div>
<div class="a" style="left:0.0px;top:0px;width:1px;height:23.0px;background:rgba(90,90,110,.5)"></div>
<div class="a" style="left:0.0px;top:23px;width:1px;height:196.0px;background:#a6a6ac"></div>
<div class="a" style="left:101.0px;top:0px;width:1px;height:23.0px;background:rgba(90,90,110,.5)"></div>
<div class="a" style="left:101.0px;top:23px;width:1px;height:196.0px;background:#a6a6ac"></div>
<div class="a" style="left:247.0px;top:0px;width:1px;height:23.0px;background:rgba(90,90,110,.5)"></div>
<div class="a" style="left:247.0px;top:23px;width:1px;height:196.0px;background:#a6a6ac"></div>
<div class="a" style="left:296.0px;top:11px;width:1px;height:12.0px;background:rgba(90,90,110,.5)"></div>
<div class="a" style="left:296.0px;top:23px;width:1px;height:196.0px;background:#a6a6ac"></div>
<div class="a" style="left:341.0px;top:11px;width:1px;height:12.0px;background:rgba(90,90,110,.5)"></div>
<div class="a" style="left:341.0px;top:23px;width:1px;height:196.0px;background:#a6a6ac"></div>
<div class="a" style="left:380.0px;top:0px;width:1px;height:23.0px;background:rgba(90,90,110,.5)"></div>
<div class="a" style="left:380.0px;top:23px;width:1px;height:196.0px;background:#a6a6ac"></div>
<div class="a" style="left:426.0px;top:11px;width:1px;height:12.0px;background:rgba(90,90,110,.5)"></div>
<div class="a" style="left:426.0px;top:23px;width:1px;height:196.0px;background:#a6a6ac"></div>
<div class="a" style="left:471.0px;top:0px;width:1px;height:23.0px;background:rgba(90,90,110,.5)"></div>
<div class="a" style="left:471.0px;top:23px;width:1px;height:196.0px;background:#a6a6ac"></div>
<div class="a" style="left:535.0px;top:11px;width:1px;height:12.0px;background:rgba(90,90,110,.5)"></div>
<div class="a" style="left:535.0px;top:23px;width:1px;height:196.0px;background:#a6a6ac"></div>
<div class="a" style="left:598.0px;top:0px;width:1px;height:23.0px;background:rgba(90,90,110,.5)"></div>
<div class="a" style="left:598.0px;top:23px;width:1px;height:196.0px;background:#a6a6ac"></div>
<div class="a" style="left:661.0px;top:11px;width:1px;height:12.0px;background:rgba(90,90,110,.5)"></div>
<div class="a" style="left:661.0px;top:23px;width:1px;height:196.0px;background:#a6a6ac"></div>
<div class="a" style="left:724.0px;top:11px;width:1px;height:12.0px;background:rgba(90,90,110,.5)"></div>
<div class="a" style="left:724.0px;top:23px;width:1px;height:196.0px;background:#a6a6ac"></div>
<div class="a" style="left:787.0px;top:0px;width:1px;height:23.0px;background:rgba(90,90,110,.5)"></div>
<div class="a" style="left:787.0px;top:23px;width:1px;height:196.0px;background:#a6a6ac"></div>
<div class="a" style="left:857.0px;top:11px;width:1px;height:12.0px;background:rgba(90,90,110,.5)"></div>
<div class="a" style="left:857.0px;top:23px;width:1px;height:196.0px;background:#a6a6ac"></div>
<div class="a" style="left:926.0px;top:11px;width:1px;height:12.0px;background:rgba(90,90,110,.5)"></div>
<div class="a" style="left:926.0px;top:23px;width:1px;height:196.0px;background:#a6a6ac"></div>
<div class="a" style="left:0;top:0;width:100%;height:1px;background:#a4a4aa"></div>
<div class="a" style="left:0;top:11.0px;width:100%;height:1px;background:rgba(90,90,110,.5)"></div>
<div class="a" style="left:0;top:22.0px;width:247px;height:1px;background:#a6a6ac"></div>
<div class="a" style="left:248.0px;top:22.0px;width:48.0px;height:1px;background:#8f9bf8"></div>
<div class="a" style="left:297.0px;top:22.0px;width:44.0px;height:1px;background:#8f9bf8"></div>
<div class="a" style="left:342.0px;top:22.0px;width:38.0px;height:1px;background:#8f9bf8"></div>
<div class="a" style="left:381.0px;top:22.0px;width:45.0px;height:1px;background:#c78ef8"></div>
<div class="a" style="left:427.0px;top:22.0px;width:44.0px;height:1px;background:#c78ef8"></div>
<div class="a" style="left:472.0px;top:22.0px;width:63.0px;height:1px;background:#78dcf2"></div>
<div class="a" style="left:536.0px;top:22.0px;width:62.0px;height:1px;background:#78dcf2"></div>
<div class="a" style="left:599.0px;top:22.0px;width:62.0px;height:1px;background:#f9bb8f"></div>
<div class="a" style="left:662.0px;top:22.0px;width:62.0px;height:1px;background:#f9bb8f"></div>
<div class="a" style="left:725.0px;top:22.0px;width:62.0px;height:1px;background:#f9bb8f"></div>
<div class="a" style="left:788.0px;top:22.0px;width:69.0px;height:1px;background:#8f9bf8"></div>
<div class="a" style="left:858.0px;top:22.0px;width:68.0px;height:1px;background:#8f9bf8"></div>
<div class="a" style="left:927.0px;top:22.0px;width:69.0px;height:1px;background:#8f9bf8"></div>
<div class="a" style="left:0;top:219.0px;width:100%;height:9.0px;background:#3f3f3f;border-top:1px solid #1f1f1f"></div>
<div class="a" style="left:9.9px;top:219.9px;width:364.8px;height:7.5px;background:#0a7ff5"></div>
<svg class="a" style="left:3.4px;top:221.4px" width="3.6" height="4.2" viewBox="0 0 3.6 4.2"><path d="M0.2 2.1L3.4 0.1V4.1z" fill="#2a80e8"/></svg>
<svg class="a" style="left:935.6px;top:221.4px" width="3.6" height="4.2" viewBox="0 0 3.6 4.2"><path d="M3.4 2.1L0.2 0.1V4.1z" fill="#2a80e8"/></svg>
<div class="a" style="left:942.0px;top:22.5px;width:10.0px;height:205.5px;background:#3f3f3f"></div>
<div class="a" style="left:943.0px;top:31.7px;width:7.9px;height:39.2px;background:#0a7ff5"></div>
<svg class="a" style="left:944.9px;top:25.6px" width="4.4" height="3.4" viewBox="0 0 4.4 3.4"><path d="M2.2 0.2L4.3 3.2H0.1z" fill="#2a80e8"/></svg>
<svg class="a" style="left:944.9px;top:212.0px" width="4.4" height="3.4" viewBox="0 0 4.4 3.4"><path d="M2.2 3.2L4.3 0.2H0.1z" fill="#2a80e8"/></svg>
</div>
<div class="a" style="left:0;top:0;width:9px;height:402px;background:linear-gradient(to right,rgba(20,20,40,.18),rgba(20,20,40,.09) 45%,rgba(20,20,40,0))"></div>
</body></html>
